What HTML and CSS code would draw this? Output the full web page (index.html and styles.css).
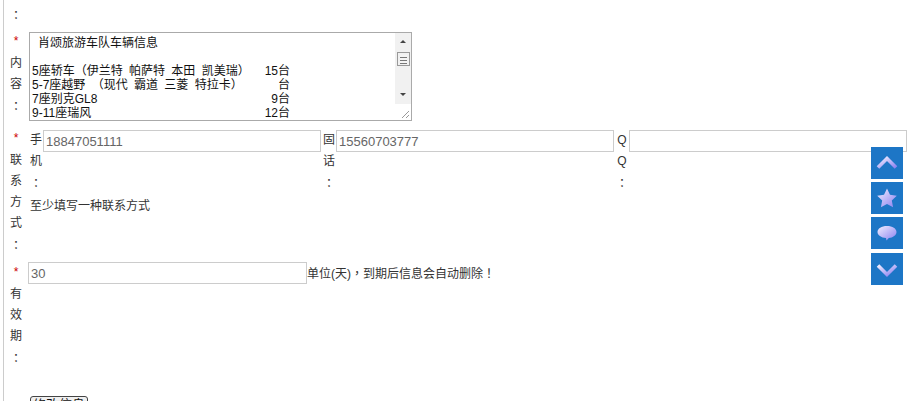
FILE: index.html
```html
<!DOCTYPE html>
<html lang="zh-CN">
<head>
  <meta charset="UTF-8">
  <title>修改信息</title>
  <link rel="stylesheet" href="styles.css">
</head>
<body>
  <div class="page">
    <div class="row row-top">
      <div class="label label-plain"><span class="punct" lang="zh-Hant">：</span></div>
    </div>

    <!-- 内容 -->
    <div class="row row-content">
      <div class="label"><span class="star">*</span>内容<span class="punct" lang="zh-Hant">：</span></div>
      <div class="memo">
        <div class="memo-text">
          <div class="memo-title">肖颂旅游车队车辆信息</div>
          <div class="memo-line"><span>5座轿车（伊兰特 帕萨特 本田 凯美瑞）</span><span>15台</span></div>
          <div class="memo-line"><span>5-7座越野 （现代 霸道 三菱 特拉卡）</span><span>台</span></div>
          <div class="memo-line"><span>7座别克GL8</span><span>9台</span></div>
          <div class="memo-line"><span>9-11座瑞风</span><span>12台</span></div>
        </div>
        <div class="scrollbar">
          <div class="arrow arrow-up"></div>
          <div class="thumb"></div>
          <div class="arrow arrow-down"></div>
          <div class="grip">
            <svg width="16" height="16" viewBox="0 0 16 16"><path d="M7 14 14 7M11 14 14 11" stroke="#999" fill="none"/></svg>
          </div>
        </div>
      </div>
    </div>

    <!-- 联系方式 -->
    <div class="row row-contact">
      <div class="label"><span class="star">*</span>联系方式<span class="punct" lang="zh-Hant">：</span></div>
      <div class="contact">
        <div class="fields">
          <div class="field">
            <label class="field-label">手机<span class="punct" lang="zh-Hant">：</span></label>
            <input class="text-input" type="text" value="18847051111">
          </div>
          <div class="field">
            <label class="field-label">固话<span class="punct" lang="zh-Hant">：</span></label>
            <input class="text-input" type="text" value="15560703777">
          </div>
          <div class="field">
            <label class="field-label">QQ<span class="punct" lang="zh-Hant">：</span></label>
            <input class="text-input" type="text">
          </div>
        </div>
        <div class="hint">至少填写一种联系方式</div>
      </div>
    </div>

    <!-- 有效期 -->
    <div class="row row-expire">
      <div class="label"><span class="star">*</span>有效期<span class="punct" lang="zh-Hant">：</span></div>
      <div class="expire">
        <input class="text-input" type="text" value="30">
        <span>单位(天)<span class="punct" lang="zh-Hant">，</span>到期后信息会自动删除<span class="punct" lang="zh-Hant">！</span></span>
      </div>
    </div>

    <div class="actions">
      <button type="submit">修改信息</button>
    </div>
  </div>

  <div class="side-nav">
    <a class="side-btn" href="#">
      <svg width="32" height="32" viewBox="0 0 32 32"><defs><linearGradient id="lav" x1="0" y1="0" x2="1" y2="1"><stop offset="0" stop-color="#f0eeff"/><stop offset="1" stop-color="#8a80f0"/></linearGradient></defs><path d="M7 20.5 16 11.500 25 20.500" fill="none" stroke="url(#lav)" stroke-width="3.6"/></svg>
    </a>
    <a class="side-btn" href="#">
      <svg width="32" height="32" viewBox="0 0 32 32"><path d="M16 6.500 19 12.800 25.800 13.700 20.800 18.400 22.100 25.300 16 22 9.900 25.300 11.200 18.400 6.200 13.700 13 12.800Z" fill="url(#lav)"/></svg>
    </a>
    <a class="side-btn" href="#">
      <svg width="32" height="32" viewBox="0 0 32 32"><path d="M16 9C21.500 9 25.500 11.600 25.500 15 25.500 18.200 22 20.700 17.800 21L15.500 23.500 15 21C10.200 20.700 6.500 18.300 6.500 15 6.500 11.600 10.500 9 16 9Z" fill="url(#lav)"/></svg>
    </a>
    <a class="side-btn side-btn-last" href="#">
      <svg width="32" height="32" viewBox="0 0 32 32"><path d="M7 12.500 16 21.500 25 12.500" fill="none" stroke="url(#lav)" stroke-width="3.6"/></svg>
    </a>
  </div>
</body>
</html>
```

FILE: styles.css
```css
html, body {
  margin: 0;
  height: 401px;
  overflow: hidden;
  background-color: #fff;
}
body {
  font-family: "Liberation Sans", "Noto Sans CJK SC", sans-serif;
  font-size: 12px;
  line-height: 21px;
  color: #333;
}
.page {
  margin-left: 3px;
  border-left: 1px solid #ccc;
  min-height: 401px;
}
.row {
  display: flex;
  align-items: flex-start;
}
.row-top {
  padding-top: 4px;
  height: 24px;
}
.row-content {
  height: 97px;
}
.row-contact {
  height: 134px;
}
.row-expire {
  height: 137px;
}
.label {
  width: 24px;
  flex: none;
  padding: 3px 6px 0;
  box-sizing: border-box;
  text-align: center;
  word-break: break-all;
  line-break: anywhere;
}
.label-plain {
  padding-top: 0;
}
.star {
  display: block;
  height: 22px;
  color: #c00;
}
/* pontuacao centrada como no original */
.punct {
  font-family: "Noto Sans CJK TC", sans-serif;
}

/* caixa de texto com barra desenhada */
.memo {
  display: flex;
  width: 381px;
  height: 87px;
  margin: 4px 0 0 1px;
  border: 1px solid #aaa;
}
.memo-text {
  flex: 1;
  padding: 3px 2px 0;
  line-height: 14px;
  color: #111;
  word-spacing: 3px;
}
.memo-title {
  padding-left: 6px;
  margin-bottom: 14px;
}
.memo-line {
  display: flex;
  justify-content: space-between;
  width: 258px;
}
.scrollbar {
  width: 16px;
  display: flex;
  flex-direction: column;
  align-items: center;
  background-color: #f1f1f1;
}
.arrow {
  width: 0;
  height: 0;
  border-left: 3px solid transparent;
  border-right: 3px solid transparent;
}
.arrow-up {
  margin-top: 7px;
  border-bottom: 3px solid #444;
}
.arrow-down {
  margin-top: 27px;
  border-top: 3px solid #444;
}
.thumb {
  width: 13px;
  height: 14px;
  margin-top: 9px;
  box-sizing: border-box;
  border: 1px solid #999;
  background: repeating-linear-gradient(#f4f4f4 0 2px, #777 2px 3px);
  background-size: 7px 9px;
  background-position: center;
  background-repeat: no-repeat;
}
.grip {
  height: 16px;
  width: 16px;
  margin-top: auto;
  background-color: #fff;
}
.grip svg {
  display: block;
}

.contact {
  flex: 1;
  padding-top: 5px;
}
.fields {
  display: flex;
  padding-left: 2px;
  gap: 2px;
}
.field {
  display: flex;
  align-items: flex-start;
}
.field-label {
  width: 12px;
  flex: none;
  text-align: center;
  word-break: break-all;
  line-break: anywhere;
}
.text-input {
  height: 22px;
  padding: 0 2px;
  box-sizing: border-box;
  border: 1px solid #ccc;
  font-family: "Liberation Sans", sans-serif;
  font-size: 13px;
  color: #666;
  outline: none;
}
.field .text-input {
  width: 278px;
  margin-left: 1px;
}
.hint {
  padding-left: 2px;
  margin-top: 1px;
}
.expire {
  display: flex;
  margin-top: 3px;
}
.expire .text-input {
  width: 279px;
}
.actions {
  padding-left: 26px;
}
.actions button {
  display: block;
  width: 58px;
  height: 18px;
  padding: 0;
  font-family: inherit;
  font-size: 13px;
  line-height: 16px;
  color: #111;
  border: 1px solid #444;
  border-radius: 3px;
  background-color: #f0f0f0;
}

.side-nav {
  position: fixed;
  left: 871px;
  top: 147px;
  display: flex;
  flex-direction: column;
  gap: 3px;
}
.side-btn {
  display: block;
  width: 32px;
  height: 32px;
  background-color: #1d76c6;
}
.side-btn-last {
  margin-top: 1px;
}
.side-btn svg {
  display: block;
}
```
